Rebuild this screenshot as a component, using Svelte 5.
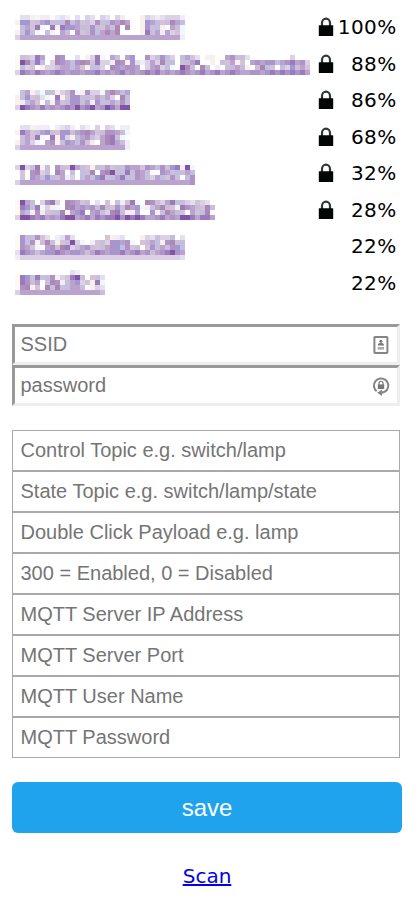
<script>
  // Redacted names are stored as mosaics: one character per 5px cell.
  const tones = {
    a: '#f0edf6', b: '#e2dfee', c: '#dcd0e6', d: '#c9bfda', e: '#baa3cf',
    f: '#ae94c6', g: '#9a7bbd', h: '#8354a6', i: '#f9efeb', j: '#eff8fd',
    k: '#d4c2d6', l: '#c2bee0', m: '#a397d0', n: '#ad88b3', o: '#a587b2', y: '#fffaf0'
  };

  const networks = [
    { top: 15, width: 34, strength: 100, locked: true, cells: [
      '.bbijaa.aba.b.cb.cb.ca...icbabccca',
      'immkdemdllnlekdcfdlfene..imelkdnel',
      '.lekgj.gigmmeldfdkedn.n..ifdli.edj',
      'idmdj.di.ed.fkdflenen....igdeaeckj',
      'ceeeeeeeeeeeeeeeeeeeeeeeeeeeeeeeea'
    ]},
    { top: 55, width: 59, strength: 88, locked: true, cells: [
      'ydkcge..nf..b.icgj.ed.em..fcdmlc.lekb.ii..efddb........c...',
      'yhnlgl.cnmelfnfkgccanfimbacecndl.dleg..i.dkeik.efemflefgefc',
      'ylck.iccdeelekidlc.nmeffe.cefclj.hnd.nl.a.dleli.dolk.lcmdek',
      'cgfegfefgfemfefmgefefgefefgfgefefgfefgefgefgfeeffefgfgfgfge'
    ]},
    { top: 90, width: 23, strength: 86, locked: true, cells: [
      '.deibjldicdfjifccjenele',
      'idmkdbj.gikmfdlkedec.nl',
      'iadek.lifklfmdeafdledfd',
      'chgfegefefgfhfghefhgehh'
    ]},
    { top: 125, width: 23, strength: 68, locked: true, cells: [
      '.bbiaaa.abca.ba.c.cb.aa',
      'igekdemdkfmdefnekdffedj',
      '.dekgj.gimcilefdcengdj.',
      'idecj.efidmelfka.engeda',
      'ceeeeeeeeeeeeeeeeeeeeea'
    ]},
    { top: 165, width: 36, strength: 32, locked: true, cells: [
      'chcdgil.fdkhedkildekldfeekfelfdmgihj',
      '.k.fncd.oe.l.ldn.fohdlgdfed..fedldel',
      '.k.fedmldeac.ledmgdlegldfedcelkfd.lf',
      'ceeeeeeeeeeeeeeeeeeeeeeeeeeeeeeeeeef'
    ]},
    { top: 200, width: 40, strength: 28, locked: true, cells: [
      'yhel.cfgc.nfekd.b.kydadgj.nfdcegldcbkcb.',
      'ygmdgjcij.noemeflndkmdnemjidendkigfedknd',
      'yelifakdloiemg.efdcngdiae..midnelk.ekln.',
      'chhgfgefeghhefgegfgghfhghgeefgefehhgegge'
    ]},
    { top: 235, width: 34, strength: 22, locked: false, cells: [
      'yfldfkb.abeb......kiab...icbdccl.b',
      'ymdfidndikdhcj.akdcfmefj.kdelifndl',
      'yfekj.efdogcdefdkdefmlfkd.kfledfml',
      'bgfedemfgfefmedegfemfgefgefdefghfe',
      'accccccccccccccccccccccccccccccccb'
    ]},
    { top: 270, width: 18, strength: 22, locked: false, cells: [
      '...........ba.....',
      'ygmdgdlfickghd.kdb',
      'ygfde.dnfademckigj',
      'yfnik.nlodleed.icb',
      'ceeeeeeeeeeeeeeeed'
    ].map((line) => line.padEnd(18, '.')) }
  ];

  const settings = [
    'Control Topic e.g. switch/lamp', 'State Topic e.g. switch/lamp/state',
    'Double Click Payload e.g. lamp', '300 = Enabled, 0 = Disabled',
    'MQTT Server IP Address', 'MQTT Server Port', 'MQTT User Name', 'MQTT Password'
  ];
</script>

<main>
  <section class="networks">
    {#each networks as net, n}
      <div class="network">
        <svg class="name" width="300" height="36" viewBox={`0 ${Math.round(9 + n * 36.5)} 300 36`} shape-rendering="crispEdges" aria-hidden="true">
          {#each net.cells as line, r}
            {#each line.slice(0, net.width) as tone, c}
              {#if tones[tone]}
                <rect x={c * 5} y={net.top + r * 5} width="5" height="5" fill={tones[tone]} />
              {/if}
            {/each}
          {/each}
        </svg>
        <span class="lock">
          {#if net.locked}
            <svg width="16" height="20" viewBox="0 0 16 20">
              <path d="M4 9.5V6a4 4.4 0 0 1 8 0V9.5" fill="none" stroke="#303635" stroke-width="2.2" />
              <rect x=".8" y="8.3" width="14.4" height="10.6" rx=".5" fill="#020706" />
            </svg>
          {/if}
        </span>
        <span class="strength">{net.strength}%</span>
      </div>
    {/each}
  </section>

  <section class="credentials">
    <div class="field">
      <input placeholder="SSID" />
      <svg width="18" height="20" viewBox="0 0 18 20">
        <rect x="2.4" y="1.9" width="13" height="16" rx=".6" fill="#fff" stroke="#858585" stroke-width="2" />
        <circle cx="8.9" cy="6.2" r="1.5" fill="#777" />
        <path d="M5.7 10.4c0-3.6 6.4-3.6 6.4 0z" fill="#777" />
        <path d="M5.7 12h6.4v2.6H5.7z" fill="#aaa" />
      </svg>
    </div>
    <div class="field">
      <input placeholder="password" />
      <svg width="18" height="20" viewBox="0 0 18 20">
        <path d="M4.6 15.2A7.2 7.2 0 1 1 15 13.8Q13.2 16.6 8.5 16.8" fill="none" stroke="#858585" stroke-width="2" />
        <path d="M10 13.4v6.6L5.2 16.8z" fill="#858585" />
        <path d="M7 9V7.3a2 2 0 0 1 4 0V9" fill="none" stroke="#858585" stroke-width="1.3" />
        <rect x="5.8" y="8.4" width="6.4" height="4.6" fill="#777" />
      </svg>
    </div>
  </section>

  <section class="settings">
    {#each settings as hint}
      <input placeholder={hint} />
    {/each}
  </section>

  <button>save</button>
  <a href="#scan">Scan</a>
</main>

<style>
  :global(body) { background: #fff; }
  main {
    box-sizing: border-box;
    width: 418px;
    height: 907px;
    overflow: hidden;
    padding: 9px 16px 0 12px;
    display: flex;
    flex-direction: column;
    font: 20px 'DejaVu Sans', sans-serif;
    color: #000;
  }
  .networks { height: 292px; margin-bottom: 23px; padding-left: 3px; }
  .network { display: flex; height: 36.5px; }
  .name { flex: none; display: block; }
  .lock { width: 16px; padding-top: 8px; margin-left: 3px; }
  .lock svg { display: block; }
  .strength {
    flex: 1;
    text-align: right;
    line-height: 37px;
    letter-spacing: .4px;
    margin-right: 5.4px;
    white-space: nowrap;
  }
  .field {
    box-sizing: border-box;
    display: flex;
    align-items: center;
    width: 388px;
    height: 41px;
    border: 3px solid;
    border-color: #999 #eee #eee #999;
    padding-right: 7px;
  }
  input {
    font: 20px 'Liberation Sans', Arial, sans-serif;
    box-sizing: border-box;
    margin: 0;
    min-width: 0;
    outline: 0;
    background: #fff;
  }
  input::placeholder { color: #757575; opacity: 1; }
  .field input { flex: 1; height: 35px; border: 0; padding: 0 5.5px; }
  .settings { display: flex; flex-direction: column; width: 388px; margin-top: 24px; }
  .settings input { height: 41px; border: 1px solid #a9a9a9; padding: 0 7.5px; }
  button {
    width: 390px;
    height: 51px;
    flex: none;
    margin: 24px 0 0;
    padding: 0;
    border: 0;
    border-radius: 6px;
    background: #1fa3ec;
    color: #fff;
    font: 24px 'Liberation Sans', Arial, sans-serif;
  }
  a { align-self: center; margin-top: 31px; color: #00e; text-decoration: underline; }
</style>
